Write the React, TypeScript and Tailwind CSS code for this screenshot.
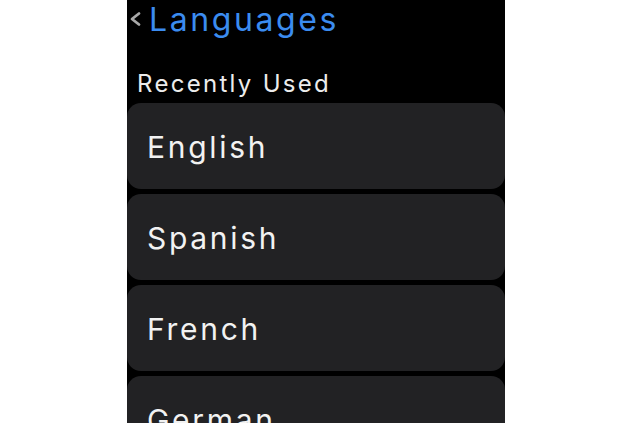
import React from "react";

const items = ["English", "Spanish", "French", "German"];

export default function App() {
  return (
    <div className="w-[640px] h-[423px] bg-white overflow-hidden" style={{ fontFamily: "Inter, 'Open Sans', sans-serif" }}>
      <div className="ml-[127px] w-[378px] h-full bg-black flex flex-col overflow-hidden">
        <div className="h-[40px] flex items-start shrink-0">
          <svg width="14" height="16" viewBox="0 0 14 16" className="ml-[1px] mt-[11px] shrink-0">
            <path d="M11 2.5 L4 8 L11 13.5" fill="none" stroke="#a8a8a8" strokeWidth="2.8" strokeLinecap="round" strokeLinejoin="round" />
          </svg>
          <span className="ml-[7px] text-[32px] leading-[40px] text-[#3b8cf0] tracking-[2.6px]">Languages</span>
        </div>
        <div className="mt-[29px] pl-[10px] text-[24px] leading-[30px] text-[#ececec] tracking-[2.3px] shrink-0">
          Recently Used
        </div>
        <div className="mt-[4px] flex flex-col gap-[5px]">
          {items.map((t) => (
            <div key={t} className="h-[86px] shrink-0 rounded-[14px] bg-[#222224] pl-[20px] pt-[29px]">
              <span className="text-[30px] leading-[30px] text-[#f2f2f2] tracking-[2.7px]">{t}</span>
            </div>
          ))}
        </div>
      </div>
    </div>
  );
}
